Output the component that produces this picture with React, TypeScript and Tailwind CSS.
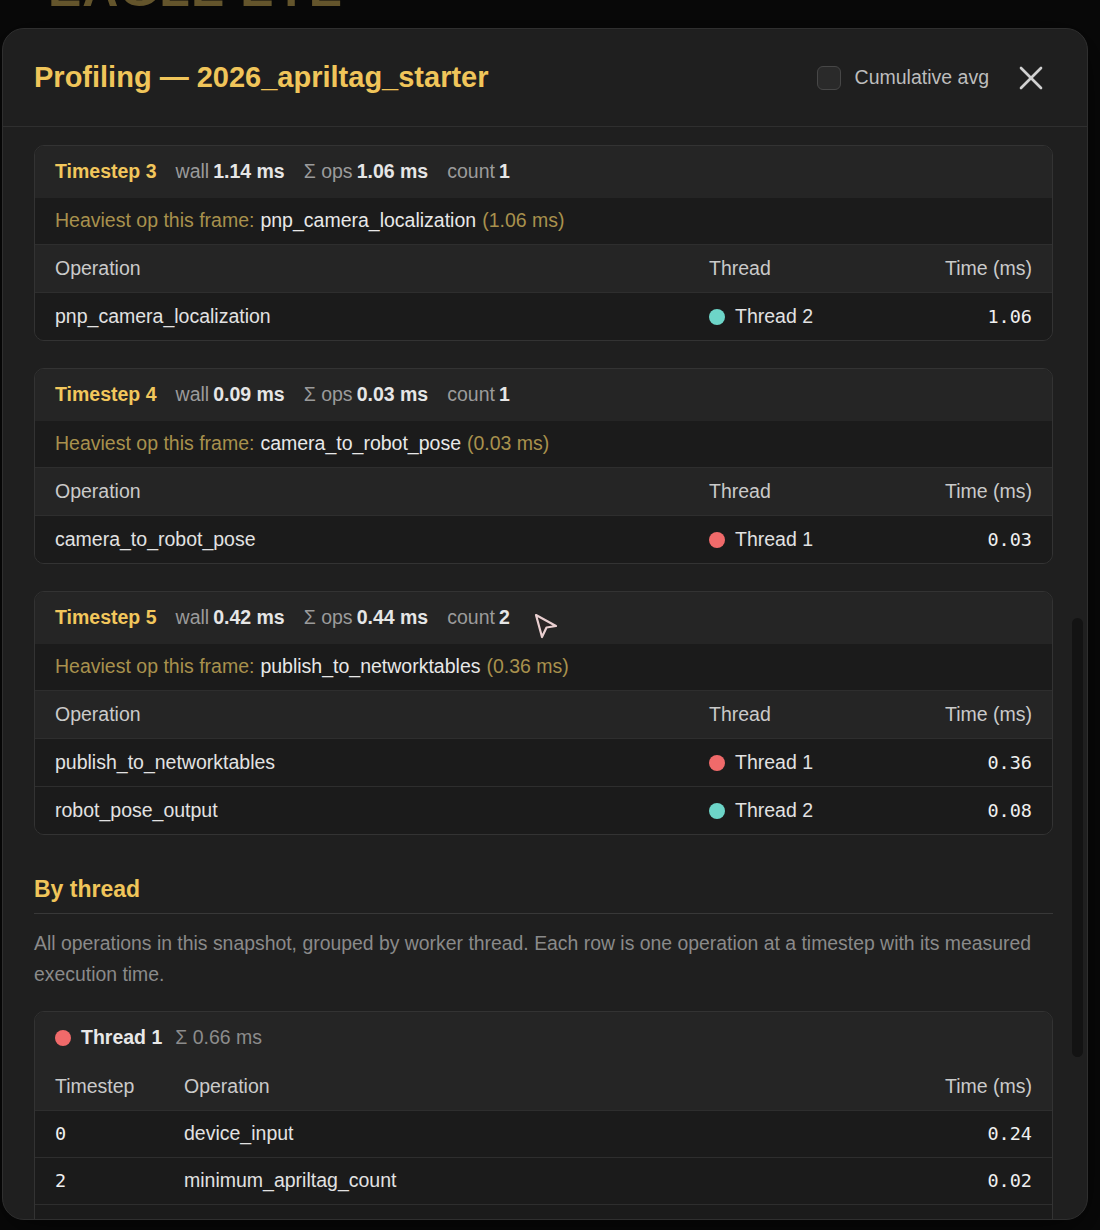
import { X } from 'lucide-react';

type Row = { op: string; thread: 1 | 2; ms: string };

const timesteps: {
  n: number;
  wall: string;
  ops: string;
  count: number;
  heavy: string;
  heavyMs: string;
  rows: Row[];
}[] = [
  {
    n: 3,
    wall: '1.14',
    ops: '1.06',
    count: 1,
    heavy: 'pnp_camera_localization',
    heavyMs: '1.06',
    rows: [{ op: 'pnp_camera_localization', thread: 2, ms: '1.06' }],
  },
  {
    n: 4,
    wall: '0.09',
    ops: '0.03',
    count: 1,
    heavy: 'camera_to_robot_pose',
    heavyMs: '0.03',
    rows: [{ op: 'camera_to_robot_pose', thread: 1, ms: '0.03' }],
  },
  {
    n: 5,
    wall: '0.42',
    ops: '0.44',
    count: 2,
    heavy: 'publish_to_networktables',
    heavyMs: '0.36',
    rows: [
      { op: 'publish_to_networktables', thread: 1, ms: '0.36' },
      { op: 'robot_pose_output', thread: 2, ms: '0.08' },
    ],
  },
];

const thread1Rows = [
  { ts: '0', op: 'device_input', ms: '0.24' },
  { ts: '2', op: 'minimum_apriltag_count', ms: '0.02' },
  { ts: '4', op: 'camera_to_robot_pose', ms: '0.03' },
  { ts: '5', op: 'publish_to_networktables', ms: '0.36' },
];

const Dot = ({ thread }: { thread: 1 | 2 }) => (
  <span
    className={
      thread === 1
        ? 'inline-block w-[16px] h-[16px] rounded-full bg-[#f06a6a]'
        : 'inline-block w-[16px] h-[16px] rounded-full bg-[#6dd5c8]'
    }
  />
);

const Stat = ({ label, value }: { label: string; value: string }) => (
  <span className="flex items-baseline gap-[4px]">
    <span className="text-[#9b9b9b]">{label}</span>
    <span className="text-[#e6e6e6] font-semibold">{value}</span>
  </span>
);

const TimestepCard = ({ t }: { t: (typeof timesteps)[number] }) => (
  <div className="border border-[#333333] rounded-[10px] overflow-hidden">
    <div className="h-[52px] bg-[#252525] flex items-center gap-[19px] px-[20px]">
      <span className="text-[#f2c75c] font-bold">Timestep {t.n}</span>
      <Stat label="wall" value={`${t.wall} ms`} />
      <Stat label="Σ ops" value={`${t.ops} ms`} />
      <Stat label="count" value={`${t.count}`} />
    </div>
    <div className="h-[46px] bg-[#1b1b1b] flex items-center px-[20px] text-[#a8914d]">
      Heaviest op this frame:
      <span className="text-[#e8e8e8] ml-[6px] mr-[6px]">{t.heavy}</span>({t.heavyMs} ms)
    </div>
    <div className="h-[48px] bg-[#252525] border-t border-[#2e2e2e] grid grid-cols-[654px_1fr_auto] items-center px-[20px] text-[#cacaca]">
      <span>Operation</span>
      <span>Thread</span>
      <span>Time (ms)</span>
    </div>
    {t.rows.map((r) => (
      <div
        key={r.op}
        className="h-[48px] bg-[#1b1b1b] border-t border-[#2e2e2e] grid grid-cols-[654px_1fr_auto] items-center px-[20px] text-[#e2e2e2]"
      >
        <span>{r.op}</span>
        <span className="flex items-center gap-[10px]">
          <Dot thread={r.thread} />
          Thread {r.thread}
        </span>
        <span className="font-['DejaVu_Sans_Mono',monospace] text-[18.5px] text-[#f0f0f0]">{r.ms}</span>
      </div>
    ))}
  </div>
);

export default function App() {
  return (
    <div className="relative w-[1100px] h-[1230px] overflow-hidden bg-[#090909] font-['Liberation_Sans',Arial,sans-serif]">
      {/* page behind the dialog */}
      <div className="h-[28px] overflow-hidden pl-[48px]">
        <div className="mt-[-36px] text-[50px] leading-none font-bold text-[#66572d] tracking-[1px]">
          EAGLE EYE
        </div>
      </div>

      {/* dialog */}
      <div className="absolute top-[28px] left-[2px] w-[1086px] h-[1192px] bg-[#1f1f1f] border border-[#2f2f2f] rounded-[22px] overflow-hidden flex flex-col shadow-[0_10px_40px_rgba(0,0,0,0.6)]">
        <div className="h-[98px] shrink-0 border-b border-[#2f2f2f] flex items-center justify-between pl-[31px] pr-[36px]">
          <h2 className="text-[29px] font-bold text-[#f0c55a]">
            Profiling — 2026_apriltag_starter
          </h2>
          <div className="flex items-center">
            <span className="w-[24px] h-[24px] rounded-[6px] border border-[#474747] bg-[#2a2a2a]" />
            <span className="ml-[14px] text-[19.5px] text-[#bdbdbd]">Cumulative avg</span>
            <span className="ml-[22px] text-[#d0d0d0]">
              <X size={40} strokeWidth={1.6} />
            </span>
          </div>
        </div>

        <div className="flex-1 min-h-0 flex">
          <div className="flex-1 min-w-0 overflow-hidden pl-[31px] pt-[18px] text-[19.5px]">
            <div className="flex flex-col gap-[27px]">
              {timesteps.map((t) => (
                <TimestepCard key={t.n} t={t} />
              ))}
            </div>

            <h3 className="mt-[40px] h-[28px] leading-[28px] text-[23px] font-bold text-[#f0c55a]">By thread</h3>
            <div className="mt-[10px] border-t border-[#383838]" />
            <p className="mt-[14px] text-[19.4px] leading-[31px] text-[#8a8a8a]">
              All operations in this snapshot, grouped by worker thread. Each row is one operation at a timestep with its measured
              execution time.
            </p>

            <div className="mt-[21px] border border-[#333333] rounded-[10px] overflow-hidden">
              <div className="h-[51px] bg-[#252525] flex items-center gap-[13px] px-[20px]">
                <span className="flex items-center gap-[10px] font-bold text-[#e8e8e8]">
                  <Dot thread={1} />
                  Thread 1
                </span>
                <span className="text-[#8c8c8c]">Σ 0.66 ms</span>
              </div>
              <div className="h-[47px] bg-[#252525] grid grid-cols-[129px_1fr_auto] items-center px-[20px] text-[#cacaca]">
                <span>Timestep</span>
                <span>Operation</span>
                <span>Time (ms)</span>
              </div>
              {thread1Rows.map((r) => (
                <div
                  key={r.ts}
                  className="h-[47px] bg-[#1b1b1b] border-t border-[#2e2e2e] grid grid-cols-[129px_1fr_auto] items-center px-[20px] text-[#e2e2e2]"
                >
                  <span className="font-['DejaVu_Sans_Mono',monospace] text-[18.5px] text-[#f0f0f0]">{r.ts}</span>
                  <span>{r.op}</span>
                  <span className="font-['DejaVu_Sans_Mono',monospace] text-[18.5px] text-[#f0f0f0]">{r.ms}</span>
                </div>
              ))}
            </div>
          </div>

          {/* scrollbar */}
          <div className="w-[11px] ml-[19px] mr-[4px] shrink-0">
            <div className="mt-[491px] h-[439px] rounded-full bg-[#131313]" />
          </div>
        </div>
      </div>

      {/* mouse pointer */}
      <svg
        className="absolute left-[532px] top-[612px]"
        width="28"
        height="28"
        viewBox="0 0 28 28"
        fill="none"
      >
        <path
          d="M4 3 L24 14 L14.5 15.5 L10 25 Z"
          fill="#2a2424"
          stroke="#e9cfd0"
          strokeWidth="2.2"
          strokeLinejoin="round"
        />
      </svg>
    </div>
  );
}
